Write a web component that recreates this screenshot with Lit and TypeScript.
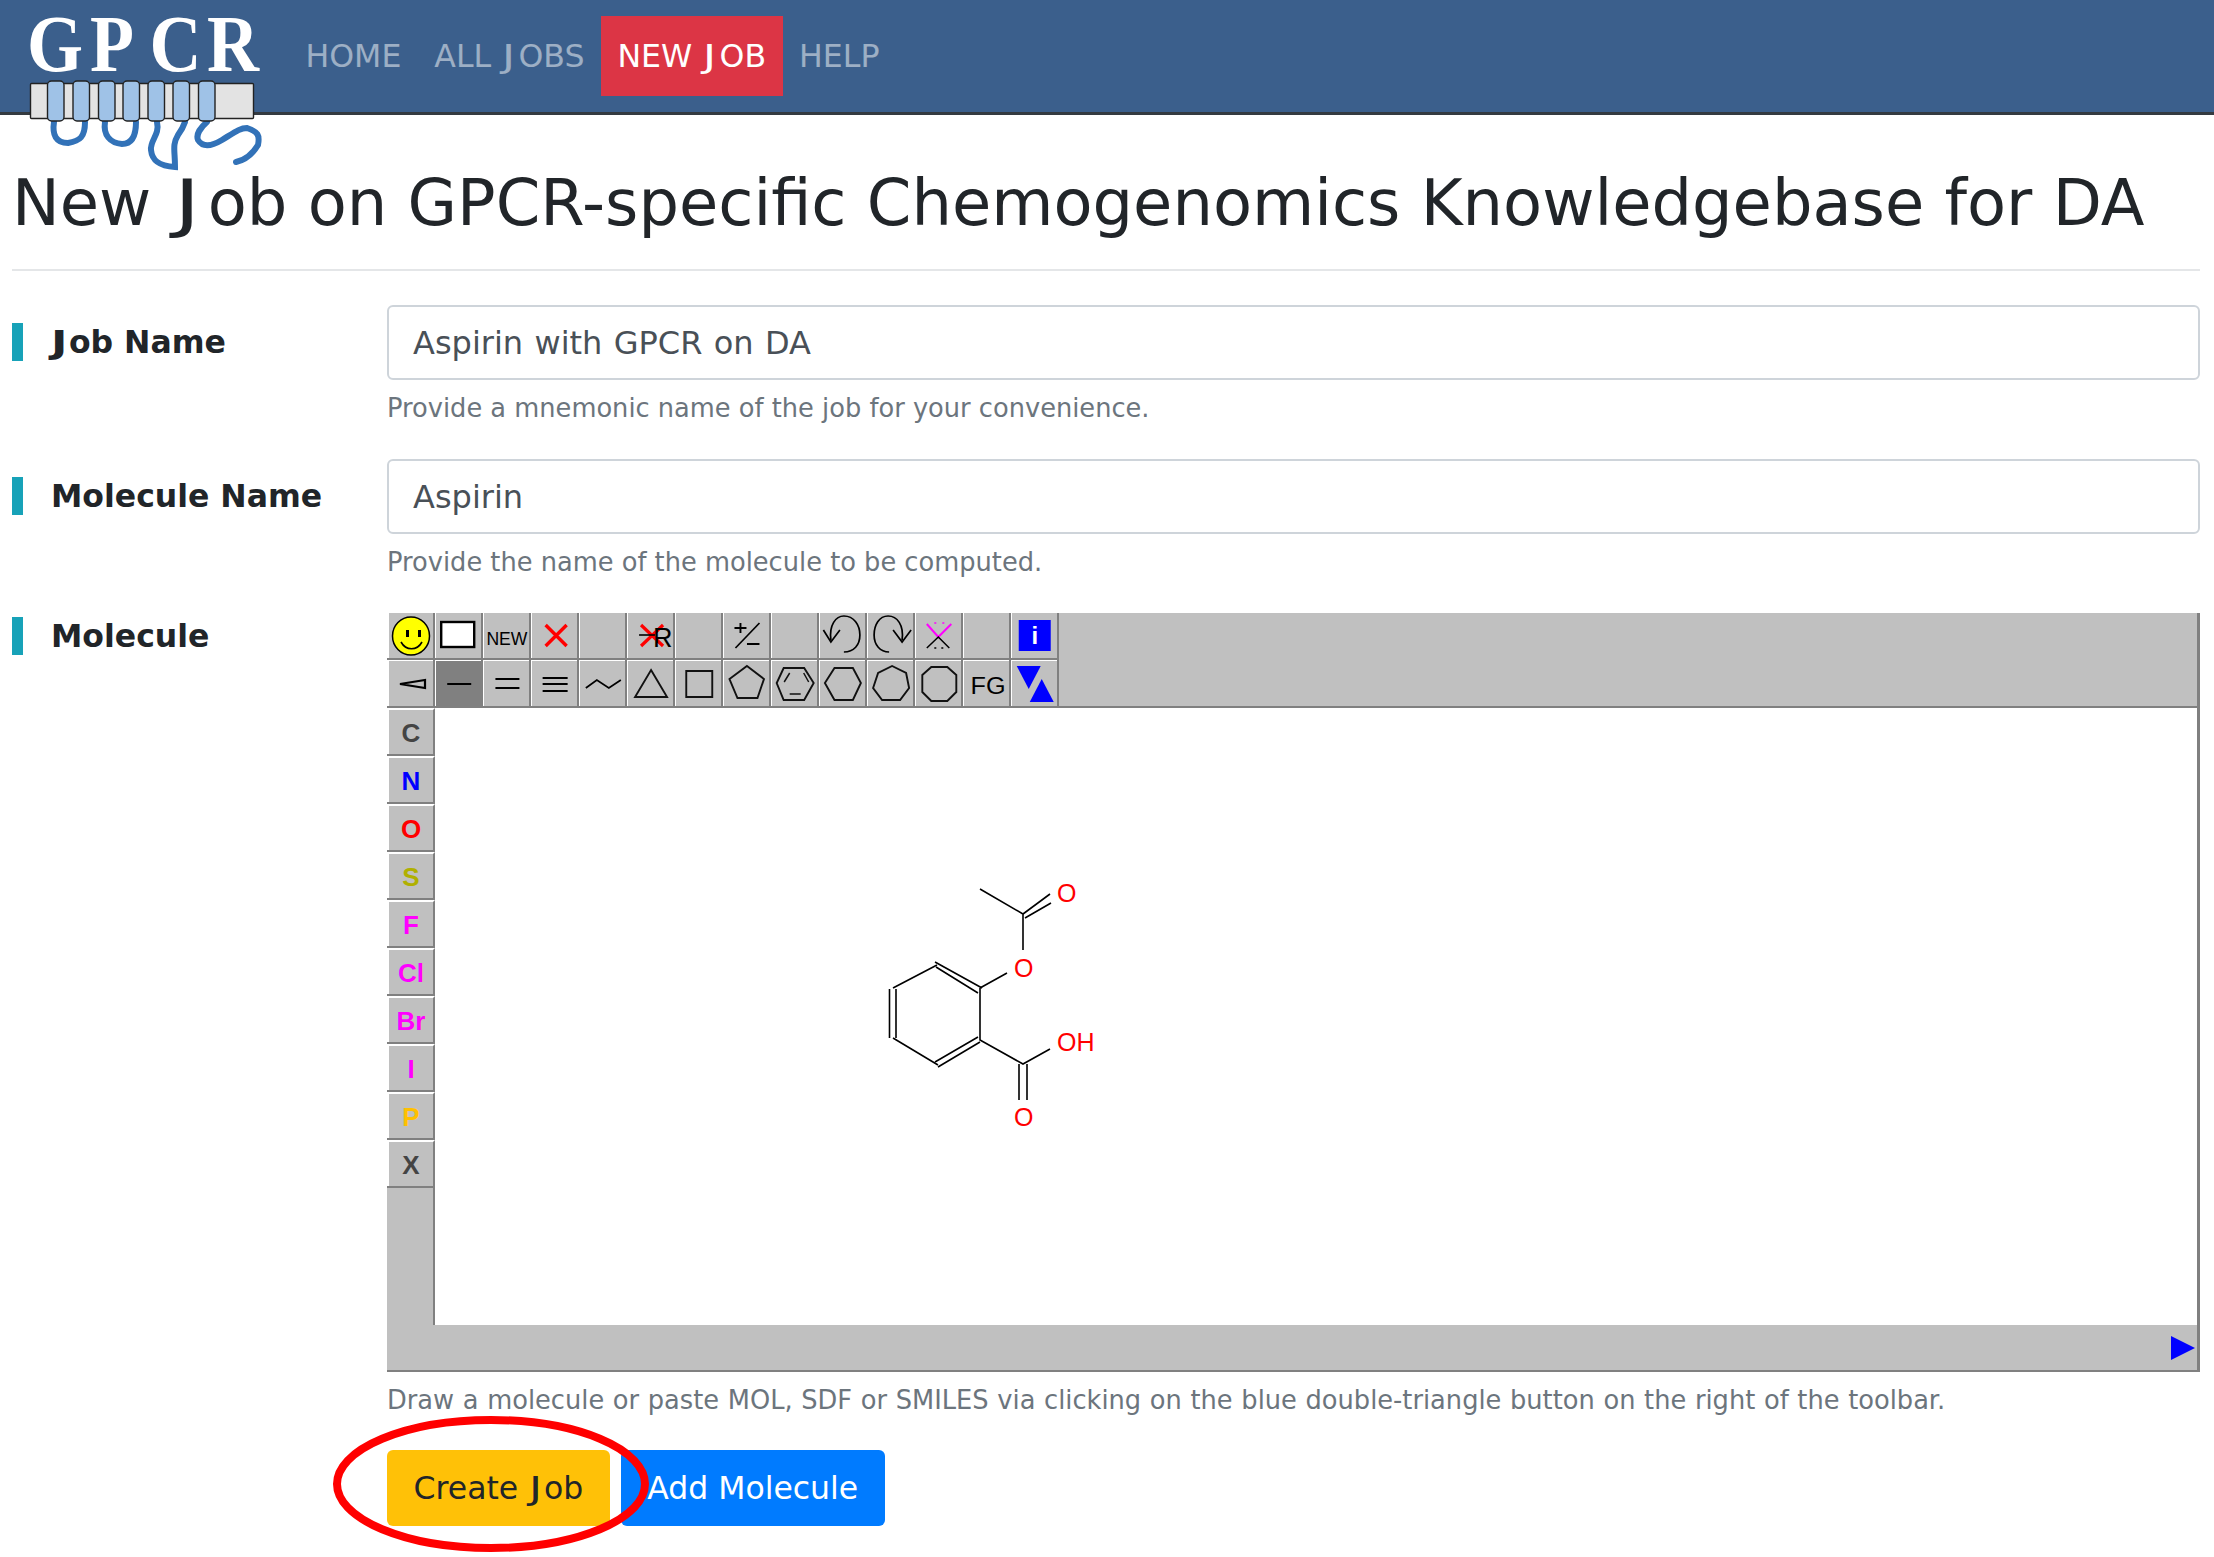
import { LitElement, html, css, svg } from "lit";
import { customElement } from "lit/decorators.js";

const poly = (p: string) => svg`<polygon points=${p} fill="none" stroke="#111" stroke-width="1.9"/>`;
const J = html`<span class="j">J</span>`;
const top: unknown[] = [
  svg`<ellipse cx="22" cy="23" rx="18.5" ry="19" fill="#ff0" stroke="#000" stroke-width="1.5"/><rect x="17" y="17" width="3" height="7"/><rect x="29" y="17" width="3" height="7"/><path d="M12 29 C17 38 28 38 33 29" fill="none" stroke="#000" stroke-width="1.6"/>`,
  svg`<rect x="4" y="9" width="33" height="25" fill="#fff" stroke="#000" stroke-width="2.4"/>`,
  svg`<text x="1" y="32" class="t" font-size="18.5" textLength="41" lengthAdjust="spacingAndGlyphs">NEW</text>`,
  svg`<path d="M12 12 L33 33 M33 12 L12 33" stroke="#f00" stroke-width="3.4"/>`,
  svg``,
  svg`<path d="M11 12 L33 33 M33 12 L11 33" stroke="#f00" stroke-width="3.2"/><path d="M9 22 H25" stroke="#000" stroke-width="1.6"/><text x="23" y="34" class="t" font-size="27">R</text>`,
  svg``,
  svg`<path d="M33 10 L9 35" stroke="#000" stroke-width="1.7"/><path d="M14 10 V20 M8 15 H20 M20.500 31 H33" stroke="#000" stroke-width="1.9"/>`,
  svg``,
  svg`<path d="M8 27 C6 12 13 3 21 3 C31 3 37 12 37 22 C37 32 31 39 21 39" fill="none" stroke="#000" stroke-width="1.7"/><path d="M0.500 17 L8 29 L17 17" fill="none" stroke="#000" stroke-width="1.7"/>`,
  svg`<path d="M31 27 C33 12 26 3 17 3 C8 3 3 12 3 22 C3 32 9 39 18 39" fill="none" stroke="#000" stroke-width="1.7"/><path d="M22 17 L31 29 L40 17" fill="none" stroke="#000" stroke-width="1.7"/>`,
  svg`<path d="M7.500 11 L19 24 L32 11" fill="none" stroke="#f0f" stroke-width="2"/><path d="M7.500 35 L19 24 L30 35" fill="none" stroke="#000" stroke-width="1.5"/><path d="M15 10 H17 M23 10 H25" stroke="#f0f" stroke-width="1.5"/><path d="M15 35 H17 M22 35 H24" stroke="#000" stroke-width="1.5"/>`,
  svg``,
  svg`<rect x="3" y="7" width="32" height="31" fill="#00f"/><text x="19" y="31" font-size="24" font-weight="700" fill="#fff" class="t" text-anchor="middle">i</text>`,
];
const bot: unknown[] = [
  svg`<polygon points="11,23 36,19 36,27" fill="none" stroke="#000" stroke-width="2.2"/>`,
  svg`<path d="M10 23 H34" stroke="#000" stroke-width="2"/>`,
  svg`<path d="M10 18 H34 M10 27 H34" stroke="#000" stroke-width="2"/>`,
  svg`<path d="M9 17 H34 M9 23 H34 M9 30 H34" stroke="#000" stroke-width="2"/>`,
  svg`<path d="M4 27 L15 19 L27 27 L39 19" fill="none" stroke="#000" stroke-width="1.8"/>`,
  poly("21,9 37,36 5,36"),
  poly("8,10 34,10 34,36 8,36"),
  poly("20.500,5 37.500,18 31,37 11,37 3,18"),
  svg`${poly("9,7 29.500,7 39,22 29.500,39 9,39 2,22")}<path d="M9.500 21 L15 12 M29 12 L34 21 M15 33 H26" stroke="#111" stroke-width="1.5"/>`,
  poly("11.600,7 30,7 38,22 30,39 11.600,39 2,22"),
  poly("21,5 35,12 38,27 29,39 11,39 2,27 7,12"),
  poly("12,6 28,6 37,14 37,31 28,40 12,40 3,31 3,14"),
  svg`<text x="3" y="33" class="t" font-size="23" textLength="35" lengthAdjust="spacingAndGlyphs">FG</text>`,
  svg`<polygon points="1,5 25,5 13,28" fill="#00f"/><polygon points="26,18 38,41 14,41" fill="#00f"/>`,
];
const atoms: [string, string][] = [["C", "#444"], ["N", "#00f"], ["O", "#f00"], ["S", "#b0b000"], ["F", "#f0f"], ["Cl", "#f0f"], ["Br", "#f0f"], ["I", "#f0f"], ["P", "#ffc000"], ["X", "#444"]];
const icon = (c: unknown, i: number) => html`<svg viewBox="0 0 46 45"><g transform="translate(${2 + i * 0.21} 0)">${c}</g></svg>`;

@customElement("app-root")
export class AppRoot extends LitElement {
  static styles = css`
    :host { display: block; font-family: "DejaVu Sans", sans-serif; color: #212529; background: #fff; height: 1557px; overflow: hidden; position: relative; }
    .j { display: inline-block; margin-left: .03em; width: .47em; transform: scaleX(1.4); transform-origin: 0 50%; }
    nav .j { width: .515em; }
    h1 .j { width: .535em; }
    .label .j { margin-left: 0; width: .57em; }
    nav { height: 115px; box-sizing: border-box; background: #3b5f8c; border-bottom: 3px solid #343a40; display: flex; align-items: flex-start; padding: 16px 0 0 289px; position: relative; }
    .logo { position: absolute; left: 0; top: 0; width: 280px; height: 180px; }
    .logo text { font-family: "Liberation Serif", serif; font-weight: 700; font-size: 80px; fill: #fff; }
    nav a { height: 80px; display: flex; align-items: center; padding: 0 16.5px; font-size: 31.6px; color: rgba(255,255,255,.5); white-space: pre; }
    nav a.on { background: #dc3545; color: #fff; }
    main { padding: 0 14px 0 12px; }
    h1 { margin: 0; padding: 50px 0 0; font-size: 63.9px; font-weight: 400; line-height: 76px; white-space: nowrap; }
    hr { border: 0; border-top: 2px solid #e4e6e8; margin: 28px 0 34px; }
    .row { display: grid; grid-template-columns: 375px 1fr; }
    .label { align-self: start; border-left: 11px solid #17a2b8; padding-left: 28px; font-weight: 700; font-size: 31.5px; line-height: 38px; margin-top: 18px; height: 38px; white-space: nowrap; }
    .label.m { margin-top: 4px; }
    .input { height: 75px; box-sizing: border-box; border: 2px solid #ced4da; border-radius: 6px; display: flex; align-items: center; padding: 0 24px; font-size: 32px; color: #495057; word-spacing: 1.200px; }
    .help { color: #6c757d; font-size: 25.7px; line-height: 40px; margin: 8px 0 31px; white-space: nowrap; }
    .editor { background: #c0c0c0; height: 759px; box-sizing: border-box; border-right: 3px solid #808080; border-bottom: 2px solid #808080; display: flex; flex-direction: column; font-family: "Liberation Sans", sans-serif; }
    .bar { display: flex; flex-direction: column; border-bottom: 2px solid #808080; height: 95px; box-sizing: border-box; }
    .tr { display: flex; height: 47px; }
    .tr + .tr { height: 46px; }
    .cell { width: 48px; height: 47px; box-sizing: border-box; border-right: 2px solid #808080; border-bottom: 2px solid #808080; box-shadow: inset 1px 0 #fff; }
    .cell:first-child { box-shadow: inset 2px 0 #fff; }
    .tr + .tr .cell { height: 46px; border-bottom: 0; box-shadow: inset 1px 1px #fff; }
    .tr + .tr .cell:first-child { box-shadow: inset 2px 1px #fff; }
    .cell.sel { background: #808080; }
    .cell svg { display: block; width: 46px; height: 45px; overflow: visible; }
    .tr + .tr .cell svg { margin-top: 1px; }
    .t { font-family: "Liberation Sans", sans-serif; }
    .mid { display: flex; height: 617px; }
    .side { width: 48px; flex: none; }
    .atom { height: 48px; box-sizing: border-box; border-right: 2px solid #808080; border-bottom: 2px solid #808080; border-top: 2px solid #fff; box-shadow: inset 2px 0 #fff; display: flex; align-items: center; justify-content: center; font-weight: 700; font-size: 26px; padding: 2px 0 0 2px; }
    .side .rest { height: 137px; box-sizing: border-box; border-right: 2px solid #808080; }
    .canvas { flex: 1; background: #fff; position: relative; }
    .mol { position: absolute; left: 425px; top: 152px; width: 260px; height: 280px; }
    .mol text { font-family: "Liberation Sans", sans-serif; font-size: 25px; fill: #f00; }
    .foot { flex: 1; display: flex; justify-content: flex-end; align-items: center; padding-right: 2px; }
    .foot svg { width: 24px; height: 24px; display: block; }
    .help.last { margin: 8px 0 30px; word-spacing: .5px; }
    .btns { display: flex; gap: 11px; }
    .btn { height: 76px; box-sizing: border-box; border-radius: 6px; padding: 0 26.500px; display: flex; align-items: center; font-size: 31.5px; white-space: pre; }
    .yellow { background: #ffc107; color: #212529; }
    .blue { background: #007bff; color: #fff; }
    .ring { position: absolute; left: 328px; top: 1410px; width: 326px; height: 147px; pointer-events: none; }
  `;

  render() {
    return html`
      <nav>
        <svg class="logo" viewBox="0 0 280 180">
          <text transform="scale(.9 1)" x="30 100 166 230" y="71">GPCR</text>
          <g fill="none" stroke="#3272b8" stroke-width="6" stroke-linecap="round">
            <path d="M54 122 C52 135 56 143 68 143 C80 141 85 137 85 122"/>
            <path d="M105 122 C103 135 110 143 122 144 C132 144 136 135 136 122"/>
            <path d="M157 122 C160 135 150 140 151 150 C152 160 158 166 175 167 C175 150 172 145 178 135 C183 128 184 125 185 122"/>
            <path d="M207 122 C200 128 196 135 198 140 C203 148 212 146 222 140 C235 132 240 128 247 128 C258 132 260 135 258 145 C252 155 245 160 236 162"/>
          </g>
          <rect x="30.5" y="83.5" width="223" height="35" fill="#e3e3e3" stroke="#222" stroke-width="1.4" rx="1"/>
          ${[47.5, 73, 98.5, 123, 148, 173, 198.5].map((x) => svg`<rect x=${x} y="81" width="16.5" height="40" rx="4" fill="#9fc2e7" stroke="#222" stroke-width="1.4"/>`)}
        </svg>
        <a>HOME</a><a>ALL ${J}OBS</a><a class="on">NEW ${J}OB</a><a>HELP</a>
      </nav>
      <main>
        <h1>New ${J}ob on GPCR-specific Chemogenomics Knowledgebase for DA</h1>
        <hr />
        <div class="row">
          <div class="label">${J}ob Name</div>
          <div>
            <div class="input">Aspirin with GPCR on DA</div>
            <div class="help">Provide a mnemonic name of the job for your convenience.</div>
          </div>
        </div>
        <div class="row">
          <div class="label">Molecule Name</div>
          <div>
            <div class="input">Aspirin</div>
            <div class="help">Provide the name of the molecule to be computed.</div>
          </div>
        </div>
        <div class="row">
          <div class="label m">Molecule</div>
          <div>
            <div class="editor">
              <div class="bar">
                <div class="tr">${top.map((c, i) => html`<div class="cell">${icon(c, i)}</div>`)}</div>
                <div class="tr">${bot.map((c, i) => html`<div class="cell ${i === 1 ? "sel" : ""}">${icon(c, i)}</div>`)}</div>
              </div>
              <div class="mid">
                <div class="side">
                  ${atoms.map(([a, c]) => html`<div class="atom" style="color:${c}">${a}</div>`)}
                  <div class="rest"></div>
                </div>
                <div class="canvas">
                  <svg class="mol" viewBox="0 0 260 280">
                    <g stroke="#000" stroke-width="1.6" fill="none">
                      <path d="M120 29 L163 54 V90 M120 128 L147 113 M120 128 V180 L163 204 L190 189 M77 105 L33 128 M33 178 L78 205"/>
                      <path d="M75 102 L122 128 M76 107 L118 133 M29.500 129 V178 M36 129 V178 M78 207 L120 182 M75 202 L118 177"/>
                      <path d="M163 54 L190 34 M165 58 L191 43 M159 204 V240 M167 204 V240"/>
                    </g>
                    <text x="197" y="42">O</text><text x="154" y="117">O</text><text x="197" y="191">OH</text><text x="154" y="266">O</text>
                  </svg>
                </div>
              </div>
              <div class="foot"><svg viewBox="0 0 24 24"><polygon points="0,0 24,12 0,24" fill="#00f"/></svg></div>
            </div>
            <div class="help last">Draw a molecule or paste MOL, SDF or SMILES via clicking on the blue double-triangle button on the right of the toolbar.</div>
            <div class="btns"><div class="btn yellow">Create ${J}ob</div><div class="btn blue">Add Molecule</div></div>
          </div>
        </div>
      </main>
      <svg class="ring" viewBox="0 0 326 147"><ellipse cx="163" cy="74" rx="154" ry="64" fill="none" stroke="#f00" stroke-width="8"/></svg>
    `;
  }
}
